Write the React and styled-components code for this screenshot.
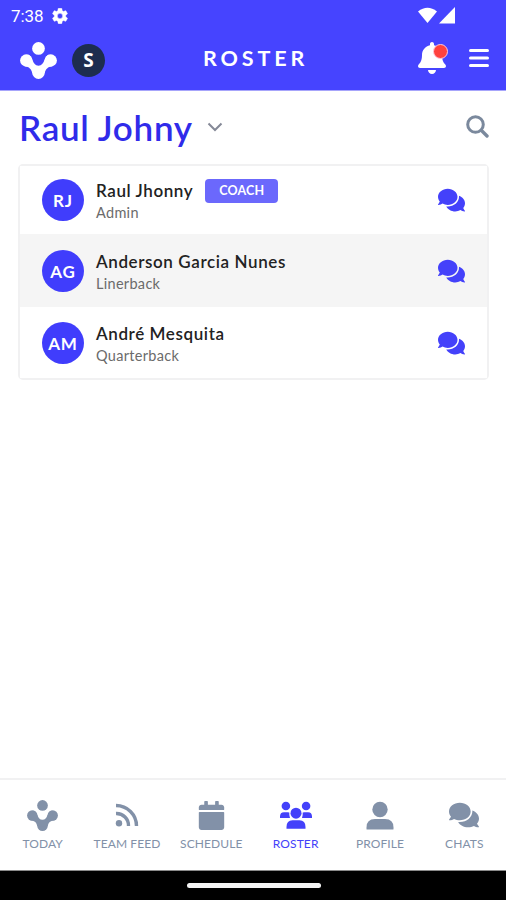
import React from "react";
import styled, { createGlobalStyle } from "styled-components";
import { FaBell, FaCalendar, FaComments } from "react-icons/fa";

const GlobalStyle = createGlobalStyle`
  * {
    box-sizing: border-box;
  }
  body {
    margin: 0;
    background: #ffffff;
    font-family: Lato, "Open Sans", sans-serif;
  }
  svg {
    display: block;
    flex: none;
  }
`;

const Screen = styled.div`
  width: 506px;
  height: 900px;
  display: flex;
  flex-direction: column;
  overflow: hidden;
  background: #ffffff;
`;

const Header = styled.header`
  height: 91px;
  background: #4644ff;
  border-bottom: 1px solid #a7a5fb;
  color: #ffffff;
`;

const StatusBar = styled.div`
  height: 32px;
  padding: 0 51px 0 11px;
  display: flex;
  align-items: center;
`;

const Clock = styled.span`
  width: 41px;
  font: 400 17px/32px Roboto, sans-serif;
  letter-spacing: -0.1px;
`;

const Signals = styled.div`
  margin-left: auto;
  display: flex;
  gap: 2px;
  padding-bottom: 2px;
`;

const TopBar = styled.div`
  height: 56px;
  padding: 0 17px 0 20px;
  display: grid;
  grid-template-columns: 110px 1fr 71px;
  align-items: center;
`;

const Brand = styled.div`
  display: flex;
  align-items: center;
  gap: 15px;
`;

const TeamBadge = styled.div`
  width: 33px;
  height: 33px;
  border-radius: 50%;
  background: #1d2d4f;
  display: flex;
  align-items: center;
  justify-content: center;
  font: 700 19px/33px "Open Sans", sans-serif;
`;

const PageTitle = styled.h1`
  margin: 0 0 5px;
  padding-left: 73px;
  font-size: 21.5px;
  font-weight: 700;
  line-height: 28px;
  letter-spacing: 3.9px;
`;

const Actions = styled.div`
  display: flex;
  align-items: center;
  justify-content: space-between;
  padding-bottom: 4px;
`;

const BellButton = styled.button`
  position: relative;
  padding: 0;
  border: 0;
  background: none;
  color: #ffffff;
`;

const BellDot = styled.span`
  position: absolute;
  top: 2px;
  right: -2px;
  width: 15px;
  height: 15px;
  border-radius: 50%;
  border: 1.5px solid #ffc9dc;
  background: #ff423e;
`;

const TeamRow = styled.div`
  height: 73px;
  padding: 0 17px 2px 19px;
  display: flex;
  align-items: center;
`;

const TeamName = styled.h2`
  margin: 0 14px 0 0;
  width: 174px;
  font-size: 35px;
  font-weight: 600;
  line-height: 44px;
  letter-spacing: 0.7px;
  white-space: nowrap;
  color: #302bea;
`;

const SearchIcon = styled.svg`
  margin: 0 0 1px auto;
`;

const Card = styled.main`
  margin: 0 17px 0 18px;
  border: 2px solid #f1f1f2;
  border-radius: 5px;
`;

const Member = styled.div`
  height: ${({ $height }) => $height}px;
  padding: 0 22px;
  display: flex;
  align-items: center;
  background: ${({ $shaded }) => ($shaded ? "#f5f5f5" : "#ffffff")};
  color: #4441fa;
`;

const Avatar = styled.div`
  width: 42px;
  height: 42px;
  margin-right: 12px;
  border-radius: 50%;
  background: #403dfc;
  color: #ffffff;
  font-size: 17px;
  font-weight: 700;
  line-height: 43px;
  letter-spacing: 0.8px;
  text-align: center;
`;

const MemberText = styled.div`
  flex: 1;
  padding-top: 3px;
`;

const NameLine = styled.div`
  height: 22px;
  display: flex;
  align-items: center;
  gap: 12px;
`;

const Name = styled.span`
  font-size: 17px;
  font-weight: 600;
  line-height: 22px;
  letter-spacing: 0.6px;
  color: #222222;
`;

const Tag = styled.span`
  width: 73px;
  height: 24px;
  border-radius: 4px;
  background: #6b68fc;
  color: #ffffff;
  font-size: 12.5px;
  font-weight: 700;
  line-height: 24px;
  letter-spacing: 0.2px;
  text-align: center;
`;

const Role = styled.div`
  font-size: 14.5px;
  line-height: 21px;
  letter-spacing: 0.3px;
  color: #6b6b6b;
`;

const TabBar = styled.nav`
  height: 93px;
  margin-top: auto;
  border-top: 2px solid #f1f1f2;
  border-bottom: 1px solid #8a8a8a;
  display: grid;
  grid-template-columns: repeat(6, 1fr);
`;

const Tab = styled.a`
  padding: 17px 0 0 1px;
  display: flex;
  flex-direction: column;
  align-items: center;
  color: ${({ $active }) => ($active ? "#4441fa" : "#8291a8")};
`;

const TabIcon = styled.span`
  height: 37px;
  padding-bottom: 1px;
  display: flex;
  align-items: center;
`;

const TabLabel = styled.span`
  font-size: 12px;
  line-height: 20px;
  letter-spacing: 0.1px;
  white-space: nowrap;
`;

const SystemBar = styled.footer`
  height: 29px;
  background: #000000;
  display: flex;
  align-items: center;
  justify-content: center;
`;

const HomePill = styled.div`
  width: 134px;
  height: 5px;
  margin-left: 1px;
  border-radius: 3px;
  background: #f4f4f4;
`;

const Logo = ({ size }) => (
  <svg width={size} height={size} viewBox="0 0 36 36" fill="currentColor">
    <circle cx="18" cy="6.3" r="6.2" />
    <circle cx="6.1" cy="18" r="6" />
    <circle cx="29.9" cy="18" r="6" />
    <circle cx="18" cy="29.8" r="6.1" />
    <path d="M7.5 12.2C13 13.5 11.5 23 18 23S23 13.5 28.5 12.2L31.500 23.5C27 24.2 25 26 24 30.5H12C11 26 9 24.2 4.500 23.5Z" />
  </svg>
);

const FeedIcon = () => (
  <svg width="24" height="24" viewBox="0 0 24 24" fill="none" stroke="currentColor" strokeWidth="3.4">
    <circle cx="4" cy="20.2" r="3.2" fill="currentColor" stroke="none" />
    <path d="M1 10.5A12 12 0 0 1 13.500 23M1 2.5A20.500 20.500 0 0 1 21.500 23" />
  </svg>
);

const RosterIcon = () => (
  <svg width="32" height="29" viewBox="0 0 32 29" fill="currentColor">
    <circle cx="5.9" cy="5" r="4.3" />
    <circle cx="26.1" cy="5" r="4.3" />
    <circle cx="16" cy="12.2" r="5.5" />
    <path d="M0 17V15.500Q0 11.200 4 11.200H7.500Q8.800 11.200 9.300 11.600Q9 14.500 10 17ZM32 17V15.500Q32 11.200 28 11.200H24.500Q23.200 11.200 22.700 11.600Q23 14.500 22 17ZM6.500 27.800V26Q6.500 19.200 12.500 19.200H19.500Q25.500 19.200 25.500 26V27.800Z" />
  </svg>
);

const ProfileIcon = () => (
  <svg width="28" height="29" viewBox="0 0 28 29" fill="currentColor">
    <circle cx="14" cy="8.5" r="7.7" />
    <path d="M0.500 28V26.500Q0.500 18 9 18H19Q27.500 18 27.500 26.500V28Q27.500 28.500 27 28.500H1Q0.500 28.500 0.500 28Z" />
  </svg>
);

const ChatIcon = ({ width, height }) => (
  <FaComments style={{ width, height }} preserveAspectRatio="none" />
);

const members = [
  { initials: "RJ", name: "Raul Jhonny", role: "Admin", tag: "COACH", height: 68 },
  { initials: "AG", name: "Anderson Garcia Nunes", role: "Linerback", height: 73, shaded: true },
  { initials: "AM", name: "André Mesquita", role: "Quarterback", height: 71 }
];

const tabs = [
  { label: "TODAY", icon: <Logo size={31} /> },
  { label: "TEAM FEED", icon: <FeedIcon /> },
  { label: "SCHEDULE", icon: <FaCalendar size={29} /> },
  { label: "ROSTER", icon: <RosterIcon />, active: true },
  { label: "PROFILE", icon: <ProfileIcon /> },
  { label: "CHATS", icon: <ChatIcon width={30} height={28} /> }
];

const App = () => (
  <>
    <GlobalStyle />
    <Screen>
      <Header>
        <StatusBar>
          <Clock>7:38</Clock>
          <svg width="16" height="16" viewBox="2 2 20 20" fill="currentColor" stroke="currentColor" strokeWidth="0.5">
            <path d="M19.140 12.940c.04-.3.060-.61.060-.94s-.02-.64-.07-.94l2.030-1.580a.49.49 0 0 0 .12-.61l-1.920-3.320a.49.49 0 0 0-.59-.22l-2.390.96a7 7 0 0 0-1.620-.94l-.36-2.540a.48.48 0 0 0-.48-.41h-3.840a.48.48 0 0 0-.47.41l-.36 2.540c-.59.24-1.130.57-1.620.94l-2.390-.96a.48.48 0 0 0-.59.22L2.740 8.870a.47.47 0 0 0 .12.61l2.030 1.580a6 6 0 0 0 0 1.880l-2.030 1.580a.49.49 0 0 0-.12.61l1.920 3.320c.12.22.37.29.59.22l2.390-.96c.5.38 1.030.7 1.620.94l.36 2.540c.05.24.24.41.48.41h3.840c.24 0 .44-.17.47-.41l.36-2.540c.59-.24 1.130-.56 1.620-.94l2.390.96c.22.08.47 0 .59-.22l1.920-3.320a.47.47 0 0 0-.12-.61zM12 15.300a3.300 3.300 0 1 1 0-6.600 3.300 3.300 0 0 1 0 6.600z" />
          </svg>
          <Signals>
            <svg width="19" height="17" viewBox="0 0 19 17" fill="currentColor">
              <path d="M0 4.500Q9.500-3 19 4.500L9.500 16Z" />
            </svg>
            <svg width="16" height="17" viewBox="0 0 16 17" fill="currentColor">
              <path d="M16 0V16.500H0Z" />
            </svg>
          </Signals>
        </StatusBar>
        <TopBar>
          <Brand>
            <Logo size={37} />
            <TeamBadge>S</TeamBadge>
          </Brand>
          <PageTitle>ROSTER</PageTitle>
          <Actions>
            <BellButton>
              <FaBell style={{ width: 28, height: 32 }} />
              <BellDot />
            </BellButton>
            <svg width="20" height="20" viewBox="0 0 20 20" stroke="currentColor" strokeWidth="3" strokeLinecap="round">
              <path d="M1.500 2.500H18.500M1.500 10H18.500M1.500 17.500H18.500" />
            </svg>
          </Actions>
        </TopBar>
      </Header>
      <TeamRow>
        <TeamName>Raul Johny</TeamName>
        <svg width="16" height="10" viewBox="0 0 16 10" fill="none" stroke="#858997" strokeWidth="2">
          <path d="M1.500 1.500L8 8L14.500 1.500" />
        </svg>
        <SearchIcon width="23" height="23" viewBox="0 0 23 23" fill="none" stroke="#7b899d">
          <circle cx="9.5" cy="9.5" r="7.8" strokeWidth="3" />
          <path d="M15.500 15.500L21 21" strokeWidth="3.4" strokeLinecap="round" />
        </SearchIcon>
      </TeamRow>
      <Card>
        {members.map(m => (
          <Member key={m.initials} $height={m.height} $shaded={m.shaded}>
            <Avatar>{m.initials}</Avatar>
            <MemberText>
              <NameLine>
                <Name>{m.name}</Name>
                {m.tag && <Tag>{m.tag}</Tag>}
              </NameLine>
              <Role>{m.role}</Role>
            </MemberText>
            <ChatIcon width={27} height={26} />
          </Member>
        ))}
      </Card>
      <TabBar>
        {tabs.map(t => (
          <Tab key={t.label} $active={t.active}>
            <TabIcon>{t.icon}</TabIcon>
            <TabLabel>{t.label}</TabLabel>
          </Tab>
        ))}
      </TabBar>
      <SystemBar>
        <HomePill />
      </SystemBar>
    </Screen>
  </>
);

export default App;
